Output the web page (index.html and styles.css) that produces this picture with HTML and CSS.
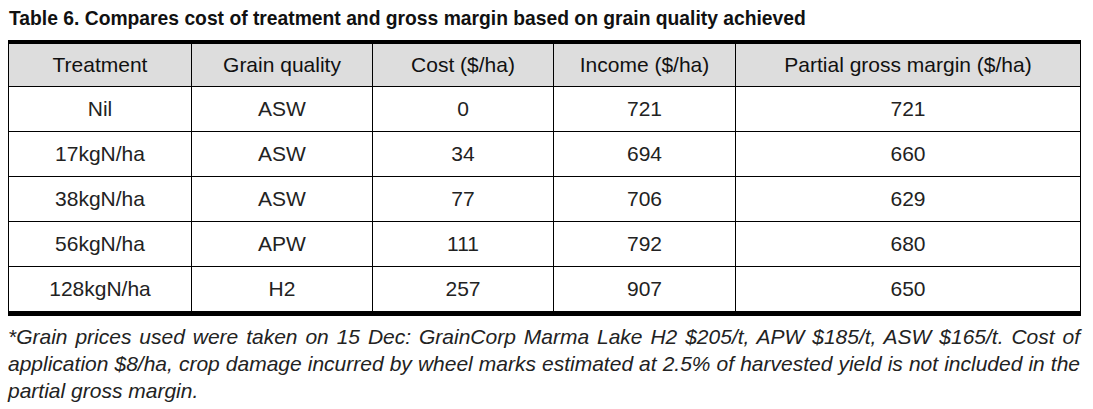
FILE: index.html
```html
<!DOCTYPE html>
<html>
<head>
<meta charset="utf-8">
<link rel="stylesheet" href="styles.css">
</head>
<body>
<div class="page">
  <h1 class="title">Table 6. Compares cost of treatment and gross margin based on grain quality achieved</h1>
  <table class="data">
    <colgroup>
      <col class="c1"><col class="c2"><col class="c3"><col class="c4"><col class="c5">
    </colgroup>
    <thead>
      <tr><th>Treatment</th><th>Grain quality</th><th>Cost ($/ha)</th><th>Income ($/ha)</th><th>Partial gross margin ($/ha)</th></tr>
    </thead>
    <tbody>
      <tr><td>Nil</td><td>ASW</td><td>0</td><td>721</td><td>721</td></tr>
      <tr><td>17kgN/ha</td><td>ASW</td><td>34</td><td>694</td><td>660</td></tr>
      <tr><td>38kgN/ha</td><td>ASW</td><td>77</td><td>706</td><td>629</td></tr>
      <tr><td>56kgN/ha</td><td>APW</td><td>111</td><td>792</td><td>680</td></tr>
      <tr><td>128kgN/ha</td><td>H2</td><td>257</td><td>907</td><td>650</td></tr>
    </tbody>
  </table>
  <p class="note">*Grain prices used were taken on 15 Dec: GrainCorp Marma Lake H2 $205/t, APW $185/t, ASW $165/t. Cost of application $8/ha, crop damage incurred by wheel marks estimated at 2.5% of harvested yield is not included in the partial gross margin.</p>
</div>
</body>
</html>
```
FILE: styles.css
```css
html, body {
  margin: 0;
  padding: 0;
  background: #ffffff;
}
.page {
  padding: 8px;
  width: 1072px;
  font-family: "Liberation Sans", Arial, sans-serif;
  color: #222222;
}
.title {
  margin: 0 0 10px 1px;
  font-size: 19.3px;
  line-height: 22px;
  font-weight: bold;
  color: #111;
}
.data {
  width: 1072px;
  border-collapse: collapse;
  table-layout: fixed;
  border-top: 4px solid #000;
  border-bottom: 5px solid #000;
}
.c1 { width: 183px; }
.c2 { width: 181px; }
.c3 { width: 181px; }
.c4 { width: 182px; }
.c5 { width: 345px; }
.data th, .data td {
  border-left: 1px solid #000;
  border-right: 1px solid #000;
  border-bottom: 1px solid #000;
  text-align: center;
  font-size: 21px;
  font-weight: normal;
  padding: 0;
  height: 44px;
  line-height: 24px;
}
.data tbody tr:last-child td {
  border-bottom: none;
}
.data th {
  background: #dddddd;
  height: 42px;
  color: #111;
}
.note {
  margin: 7px 0 0 0;
  font-size: 21px;
  line-height: 27px;
  font-style: italic;
  text-align: justify;
  color: #222222;
}
```
